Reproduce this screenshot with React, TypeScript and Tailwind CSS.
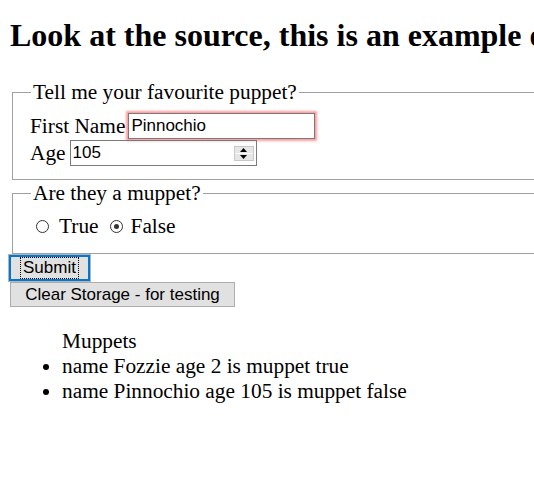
import React from 'react'

const serif = { fontFamily: '"Liberation Serif", "Times New Roman", serif' }
const sans = { fontFamily: '"Liberation Sans", Arial, sans-serif' }

const Spinner: React.FC = () => (
  <div className="flex h-[15px] w-[20px] flex-col border border-[#c8c8c8] bg-[#e6e6e6]">
    <div className="flex flex-1 items-center justify-center border-b border-[#fafafa]">
      <svg width="7" height="4" viewBox="0 0 7 4">
        <path d="M0 4 L3.5 0 L7 4 Z" fill="#000" />
      </svg>
    </div>
    <div className="flex flex-1 items-center justify-center">
      <svg width="7" height="4" viewBox="0 0 7 4">
        <path d="M0 0 L3.5 4 L7 0 Z" fill="#000" />
      </svg>
    </div>
  </div>
)

const Radio: React.FC<{ checked?: boolean }> = ({ checked }) => (
  <span className="flex h-[13px] w-[13px] items-center justify-center rounded-full border border-[#333] bg-white">
    {checked && <span className="h-[5px] w-[5px] rounded-full bg-[#333]" />}
  </span>
)

export default function App() {
  const muppets = [
    { name: 'Fozzie', age: 2, muppet: true },
    { name: 'Pinnochio', age: 105, muppet: false },
  ]

  return (
    <div className="h-[486px] w-[534px] overflow-hidden bg-white text-black" style={serif}>
      <div className="w-[760px] px-[10px] pt-[17px] text-[21.33px] leading-[normal]">
        <h1 className="mb-[26px] whitespace-nowrap text-[32px] font-bold leading-[normal]">
          Look at the source, this is an example of
        </h1>

        <fieldset className="ml-[2px] border border-[#a0a0a0] pb-[13px] pl-[17px] pt-[8px]">
          <legend className="ml-[1px] px-[2px]">Tell me your favourite puppet?</legend>
          <div className="flex flex-col gap-[1px]">
            <div className="flex h-[26px] items-center">
              <span>First Name</span>
              <input
                readOnly
                value="Pinnochio"
                className="ml-[3px] h-[26px] w-[187px] border border-[#7a7a7a] px-[2px] text-[17px] text-black shadow-[0_0_2px_2px_rgba(255,60,60,0.5)] outline-none"
                style={sans}
              />
            </div>
            <div className="flex h-[26px] items-center">
              <span>Age</span>
              <div className="ml-[4px] flex h-[26px] w-[187px] items-center border border-[#7a7a7a] px-[2px]">
                <input
                  readOnly
                  value="105"
                  className="min-w-0 flex-1 text-[17px] text-black outline-none"
                  style={sans}
                />
                <Spinner />
              </div>
            </div>
          </div>
        </fieldset>

        <fieldset className="ml-[2px] mt-[1px] border border-[#a0a0a0] pb-[14px] pl-[17px] pt-[8px]">
          <legend className="ml-[1px] px-[2px]">Are they a muppet?</legend>
          <div className="flex h-[25px] items-center">
            <span className="ml-[6px]">
              <Radio />
            </span>
            <span className="ml-[10px]">True</span>
            <span className="ml-[11px]">
              <Radio checked />
            </span>
            <span className="ml-[8px]">False</span>
          </div>
        </fieldset>

        <div className="flex flex-col items-start" style={sans}>
          <button className="ml-[-2px] h-[28px] w-[83px] border border-[#b4b4b4] bg-white p-0">
            <span className="flex h-full w-full items-center justify-center border-2 border-[#0078d7] bg-[#e1e1e1]">
              <span className="border border-dotted border-black px-[2px] text-[17px] leading-[20px]">Submit</span>
            </span>
          </button>
          <button className="h-[25px] w-[225px] border border-[#adadad] bg-[#e1e1e1] text-[17px] leading-[normal]">
            Clear Storage - for testing
          </button>
        </div>

        <div className="mt-[21.5px] pl-[52px]">
          <div>Muppets</div>
          <ul className="list-disc">
            {muppets.map((m) => (
              <li key={m.name}>
                name {m.name} age {m.age} is muppet {String(m.muppet)}
              </li>
            ))}
          </ul>
        </div>
      </div>
    </div>
  )
}
